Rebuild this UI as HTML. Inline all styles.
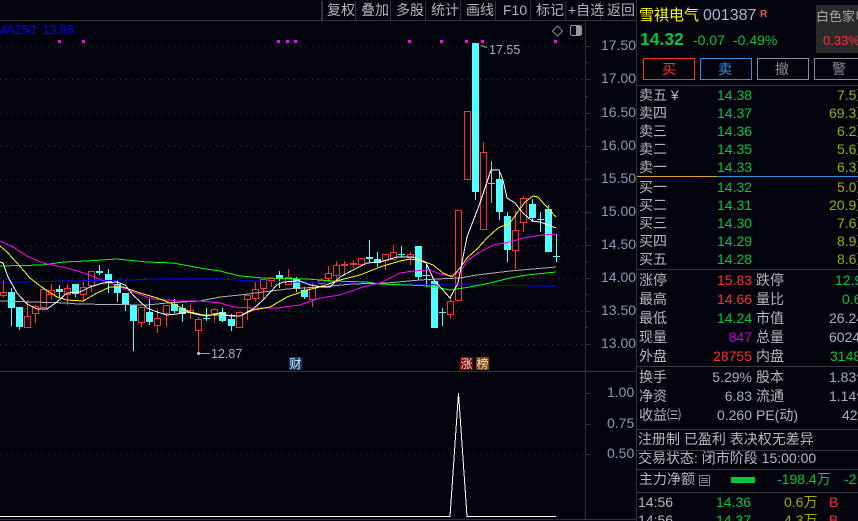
<!DOCTYPE html>
<html><head><meta charset="utf-8"><style>
html,body{margin:0;padding:0;background:#03030e;width:858px;height:521px;overflow:hidden}
svg{display:block}
text{font-family:"Liberation Sans","Noto Sans CJK SC",sans-serif;font-size:14px;white-space:pre}
.c{shape-rendering:crispEdges}
.l{fill:#b8b8b8}.g{fill:#00c83c}.r{fill:#ff3030}.o{fill:#a8a800}.v{fill:#a8b0b8}
.ax{fill:#8c9cb0;font-size:12.2px}
.tb{fill:#b4b4b4;font-size:12px}
</style></head><body>
<svg width="858" height="521" viewBox="0 0 858 521" xmlns="http://www.w3.org/2000/svg">
<rect width="858" height="521" fill="#03030e"/>
<!-- grid -->
<g class="c" stroke="#3a3a3a" stroke-dasharray="1 5" fill="none">
<path d="M0 46.5H584M0 79.5H584M0 113.5H584M0 146.5H584M0 179.5H584M0 212.5H584M0 245.5H584M0 278.5H584M0 311.5H584M0 344.5H584M0 454.5H584"/>
</g>
<!-- frame -->
<g class="c" stroke="#333" fill="none">
<path d="M321.5 1V20M322.5 1V20M355.5 1V20M390.5 1V20M425.5 1V20M460.5 1V20M495.5 1V20M530.5 1V20M565.5 1V20M600.5 1V20M0 20.5H636M585.5 21V519M636.5 0V521M0 371.5H636M0 519.5H636"/>
<path d="M585 46.5h6M585 79.5h6M585 113.5h6M585 146.5h6M585 179.5h6M585 212.5h6M585 245.5h6M585 278.5h6M585 311.5h6M585 344.5h6M585 62.5h3M585 96.5h3M585 129.5h3M585 162.5h3M585 195.5h3M585 228.5h3M585 261.5h3M585 294.5h3M585 327.5h3M585 393.5h6M585 424.5h6M585 454.5h6"/>
</g>
<!-- toolbar -->
<g class="tb">
<text x="327" y="15">复权</text><text x="361" y="15">叠加</text><text x="396" y="15">多股</text><text x="431" y="15">统计</text><text x="466" y="15">画线</text><text x="503" y="15">F10</text><text x="536" y="15">标记</text><text x="568" y="15">+自选</text><text x="607" y="15">返回</text>
</g>
<text x="-4" y="34" style="font-size:12.5px" fill="#0000ff">MA250: 13.88</text>
<!-- magenta dots -->
<path class="c" fill="#ff00ff" d="M58 40h3v3h-3zM82 40h3v3h-3zM277 40h3v3h-3zM286 40h3v3h-3zM294 40h3v3h-3zM408 40h3v3h-3zM440 40h3v3h-3zM465 40h3v3h-3zM481 40h3v3h-3zM554 40h3v3h-3z"/>
<!-- top icons -->
<path d="M557.5 26l5 5-5 5-5-5z" fill="none" stroke="#888"/>
<rect x="570.5" y="25.5" width="11" height="10" rx="2" fill="none" stroke="#999"/>
<rect x="576" y="26" width="5" height="9" fill="#999"/>
<!-- red wicks -->
<path class="c" stroke="#ff3030" fill="none" d="M3.5 280V298M27.5 300V327M35.5 305V323M43.5 287V307M51.5 284V300M67.5 284V305M83.5 282V302M91.5 271V292M141.5 307V327M157.5 309V333M166.5 305V327M190.5 303V319M198.5 317V354M214.5 308V322M239.5 312V327M247.5 295V320M255.5 282V302M263.5 279V300M271.5 278V287M288.5 269V284M312.5 283V307M321.5 278V287M328.5 266V282M336.5 261V282M344.5 261V274M353.5 260V268M361.5 258V266M385.5 254V270M393.5 245V259M410.5 252V265M450.5 297V319M483.5 142V229M515.5 210V269M523.5 196V232"/>
<!-- red bodies -->
<path class="c" stroke="#ff3030" fill="#03030e" d="M0.5 292.5h6v3h-6zM24.5 316.5h6v11h-6zM32.5 306.5h6v7h-6zM40.5 289.5h6v18h-6zM48.5 290.5h6v4h-6zM64.5 288.5h6v6h-6zM80.5 287.5h6v7h-6zM88.5 271.5h6v14h-6zM138.5 307.5h6v15h-6zM154.5 318.5h6v7h-6zM163.5 305.5h6v8h-6zM187.5 310.5h6v2h-6zM195.5 319.5h6v11h-6zM211.5 309.5h6v4h-6zM236.5 312.5h6v15h-6zM244.5 295.5h6v4h-6zM252.5 289.5h6v9h-6zM260.5 279.5h6v9h-6zM268.5 278.5h6v2h-6zM285.5 277.5h6v7h-6zM309.5 287.5h6v12h-6zM318.5 280.5h6v3h-6zM325.5 273.5h6v5h-6zM333.5 265.5h6v10h-6zM341.5 264.5h6v1h-6zM350.5 263.5h6v1h-6zM358.5 258.5h6v6h-6zM382.5 254.5h6v6h-6zM390.5 252.5h6v7h-6zM407.5 254.5h6v3h-6zM447.5 301.5h6v13h-6zM455.5 210.5h6v90h-6zM464.5 111.5h6v68h-6zM480.5 152.5h6v77h-6zM512.5 230.5h6v20h-6zM520.5 198.5h6v24h-6z"/>
<!-- cyan wicks -->
<path class="c" stroke="#50ffff" fill="none" d="M11.5 288V326M19.5 307V330M59.5 285V298M75.5 284V297M99.5 265V275M108.5 269V293M117.5 280V302M125.5 293V311M133.5 305V351M149.5 299V325M174.5 299V313M182.5 304V322M206.5 308V321M222.5 308V322M231.5 314V331M279.5 271V288M296.5 277V292M304.5 287V299M369.5 240V262M377.5 252V267M401.5 246V257M418.5 246V280M426.5 264V287M442.5 308V326M475.5 43V200M499.5 172V220M507.5 212V262M532.5 199V222M540.5 212V232M548.5 205V252M556.5 234V262"/>
<path class="c" stroke="#b8b8b8" fill="none" d="M491.5 161V203M488 183.5H495"/>
<!-- cyan bodies -->
<path class="c" fill="#50ffff" d="M8 292h7v16h-7zM16 307h7v20h-7zM56 289h7v3h-7zM72 284h7v10h-7zM96 271h7v2h-7zM105 274h7v9h-7zM114 284h7v9h-7zM122 293h7v11h-7zM130 305h7v16h-7zM146 312h7v10h-7zM171 304h7v7h-7zM179 308h7v6h-7zM203 318h7v1h-7zM219 312h7v9h-7zM228 319h7v7h-7zM276 275h7v3h-7zM293 279h7v10h-7zM301 290h7v7h-7zM366 257h7v2h-7zM374 259h7v4h-7zM398 254h7v1h-7zM415 246h7v31h-7zM423 275h7v1h-7zM431 281h7v47h-7zM439 312h7v1h-7zM472 43h7v149h-7zM496 179h7v33h-7zM504 216h7v34h-7zM529 204h7v14h-7zM537 219h7v1h-7zM545 209h7v43h-7zM553 256h7v1h-7z"/>
<!-- moving averages -->
<g fill="none" stroke-width="1" class="c">
<polyline stroke="#0000ff" points="0,282 17,282 67,281 133,280 153,279 220,279 253,281 303,282 353,282 407,284 443,285 556,286"/>
<polyline stroke="#00ff00" points="0,266 43,265 63,262 87,261 117,259 147,262 173,263 200,268 220,271 240,276 263,278 307,279 333,281 367,282 380,284 407,285 430,286 450,290 470,287 490,283 510,278 527,275 556,272"/>
<polyline stroke="#b0b0b0" points="0,301 67,303 77,304 147,305 167,303 200,301 220,297 240,295 263,292 287,289 320,287 353,284 387,283 420,280 437,279 460,278 477,275 510,271 556,267"/>
<polyline stroke="#ff00ff" points="0,241 13,247 27,256 43,263 67,268 87,274 107,282 133,292 153,299 180,301 200,301 220,303 233,307 253,308 277,308 300,305 320,298 340,295 363,287 380,283 400,273 413,271 430,270 440,274 450,276 460,272 468,260 480,252 493,245 510,242 523,238 543,235 556,234"/>
<polyline stroke="#ffff00" points="0,246 7,252 17,263 30,278 43,288 57,297 67,300 83,301 97,293 110,287 123,287 140,293 157,298 173,304 190,312 203,315 220,315 240,316 253,310 270,307 287,297 307,290 320,287 340,280 360,275 380,267 400,261 410,259 423,261 433,265 443,273 452,277 460,268 467,258 478,248 487,238 498,228 510,223 517,213 525,202 533,196 538,197 545,205 556,217"/>
<polyline stroke="#ffffff" points="0,262 3,263 8,277 17,293 27,304 37,309 47,309 57,302 67,293 80,292 90,287 103,283 117,282 125,285 133,295 147,308 157,312 167,315 177,314 187,312 200,315 207,316 220,313 230,316 240,316 253,309 263,300 277,285 283,282 300,281 310,285 323,287 330,287 340,277 353,270 367,263 380,262 397,257 413,257 426,263 434,280 450,298 458,283 467,237 480,203 491,170 499,170 503,180 507,198 515,203 523,213 532,221 540,222 548,225 556,228"/>
<polyline stroke="#ffffff" points="0,516.5 450,516.5 458.5,393 467,516.5 556,516.5"/>
</g>
<!-- price annotations -->
<path d="M487 47.5L481 45.5" stroke="#aaa" fill="none"/>
<text x="489" y="54" style="font-size:12.5px" fill="#a8b0b8">17.55</text>
<path d="M199 353.5H210" stroke="#aaa" fill="none"/>
<rect x="197" y="352" width="3" height="3" fill="#aaa"/>
<text x="211" y="358" style="font-size:12.5px" fill="#a8b0b8">12.87</text>
<!-- markers -->
<rect x="289" y="357" width="13" height="13" fill="#123a6a"/><text x="289.5" y="368" style="font-size:12px" fill="#e0e8f0">财</text>
<rect x="460" y="357" width="13" height="13" fill="#800000"/><text x="460.5" y="368" style="font-size:12px" fill="#f0e0e0">涨</text>
<rect x="476" y="357" width="13" height="13" fill="#804000"/><text x="476.5" y="368" style="font-size:12px" fill="#f0e8e0">榜</text>
<!-- axis -->
<g class="ax">
<text x="601" y="50">17.50</text><text x="601" y="83">17.00</text><text x="601" y="117">16.50</text><text x="601" y="150">16.00</text><text x="601" y="183">15.50</text><text x="601" y="216">15.00</text><text x="601" y="249">14.50</text><text x="601" y="282">14.00</text><text x="601" y="315">13.50</text><text x="601" y="348">13.00</text>
<text x="607" y="397">1.00</text><text x="607" y="428">0.75</text><text x="607" y="458">0.50</text>
</g>
<!-- quote header -->
<text x="639" y="20" style="font-size:15px" fill="#ffff00">雪祺电气</text>
<text x="703" y="20" style="font-size:16px" fill="#a8b8c8">001387</text>
<text x="760" y="17" style="font-size:10px;font-weight:bold" fill="#ff5050">R</text>
<rect x="816" y="5" width="42" height="48" fill="#2a2a2a"/>
<text x="816" y="21" style="font-size:13px" fill="#a8a8a8">白色家电</text>
<text x="823" y="45" style="font-size:13px" fill="#ff3030">0.33%</text>
<text x="640" y="45" style="font-size:17.5px;font-weight:bold" fill="#00c83c">14.32</text>
<text x="693" y="45" class="g">-0.07</text><text x="733" y="45" class="g">-0.49%</text>
<!-- buttons -->
<g class="c" fill="none">
<rect x="643.5" y="58.5" width="51" height="21" stroke="#ff3030"/>
<rect x="700.5" y="58.5" width="51" height="21" stroke="#3a90e0"/>
<rect x="757.5" y="58.5" width="51" height="21" stroke="#8c8c8c"/>
<rect x="814.5" y="58.5" width="51" height="21" stroke="#8c8c8c"/>
</g>
<text x="662" y="74" fill="#ff3030">买</text><text x="718" y="74" fill="#3a90e0">卖</text><text x="775" y="74" fill="#8c8c8c">撤</text><text x="832" y="74" fill="#8c8c8c">警</text>
<!-- separators -->
<path class="c" stroke="#3a3a3a" fill="none" d="M637 85.5H858M637 269.5H858M637 366.5H858M637 429.5H858M637 450.5H858M637 469.5H858M637 492.5H858"/>
<path class="c" stroke="#e0a030" d="M637 176.5H717"/><path class="c" stroke="#3090e0" d="M717 176.5H858"/>
<!-- order book -->
<g class="l">
<text x="639" y="100">卖五 ¥</text><text x="639" y="118">卖四</text><text x="639" y="136">卖三</text><text x="639" y="154">卖二</text><text x="639" y="172">卖一</text>
<text x="639" y="192">买一</text><text x="639" y="210">买二</text><text x="639" y="228">买三</text><text x="639" y="246">买四</text><text x="639" y="264">买五</text>
</g>
<g class="g">
<text x="717" y="100">14.38</text><text x="717" y="118">14.37</text><text x="717" y="136">14.36</text><text x="717" y="154">14.35</text><text x="717" y="172">14.33</text>
<text x="717" y="192">14.32</text><text x="717" y="210">14.31</text><text x="717" y="228">14.30</text><text x="717" y="246">14.29</text><text x="717" y="264">14.28</text>
</g>
<g class="o">
<text x="837" y="100">7.5万</text><text x="829" y="118">69.3万</text><text x="837" y="136">6.2万</text><text x="837" y="154">5.6万</text><text x="837" y="172">6.3万</text>
<text x="837" y="192">5.0万</text><text x="829" y="210">20.9万</text><text x="837" y="228">7.6万</text><text x="837" y="246">8.9万</text><text x="837" y="264">8.6万</text>
</g>
<!-- stats -->
<g class="l">
<text x="639" y="285">涨停</text><text x="756" y="285">跌停</text>
<text x="639" y="304">最高</text><text x="756" y="304">量比</text>
<text x="639" y="323">最低</text><text x="756" y="323">市值</text>
<text x="639" y="342">现量</text><text x="756" y="342">总量</text>
<text x="639" y="361">外盘</text><text x="756" y="361">内盘</text>
<text x="639" y="382">换手</text><text x="756" y="382">股本</text>
<text x="639" y="401">净资</text><text x="756" y="401">流通</text>
<text x="639" y="420">收益㈢</text><text x="756" y="420">PE(动)</text>
</g>
<text x="717" y="285" class="r">15.83</text><text x="835" y="285" class="g">12.95</text>
<text x="717" y="304" class="r">14.66</text><text x="842" y="304" class="g">0.62</text>
<text x="717" y="323" class="g">14.24</text><text x="829" y="323" class="v">26.24亿</text>
<text x="752" y="342" text-anchor="end" fill="#c000d0">847</text><text x="829" y="342" class="v">60240</text>
<text x="752" y="361" text-anchor="end" class="r">28755</text><text x="830" y="361" class="g">31485</text>
<text x="752" y="382" text-anchor="end" class="v">5.29%</text><text x="829" y="382" class="v">1.83亿</text>
<text x="752" y="401" text-anchor="end" class="v">6.83</text><text x="829" y="401" class="v">1.14亿</text>
<text x="752" y="420" text-anchor="end" class="v">0.260</text><text x="842" y="420" class="v">42.6</text>
<text x="638" y="444" class="l">注册制 已盈利 表决权无差异</text>
<text x="638" y="463" class="l">交易状态: 闭市阶段 15:00:00</text>
<text x="639" y="484" class="l">主力净额</text>
<rect x="699.5" y="475.5" width="10" height="10" rx="1" fill="none" stroke="#888"/>
<path class="c" stroke="#888" d="M701 478.5h7M701 480.5h7M701 482.5h7"/>
<rect x="731" y="477" width="24" height="6" fill="#00c83c"/>
<text x="777" y="484" class="g">-198.4万</text><text x="844" y="484" class="g">-2.1%</text>
<text x="638" y="507" class="l">14:56</text><text x="716" y="507" class="g">14.36</text><text x="784" y="507" class="o">0.6万</text><text x="829" y="507" class="r">B</text>
<text x="638" y="525" class="l">14:56</text><text x="716" y="525" class="g">14.37</text><text x="784" y="525" class="o">4.3万</text><text x="829" y="525" class="r">B</text>
</svg>
</body></html>
